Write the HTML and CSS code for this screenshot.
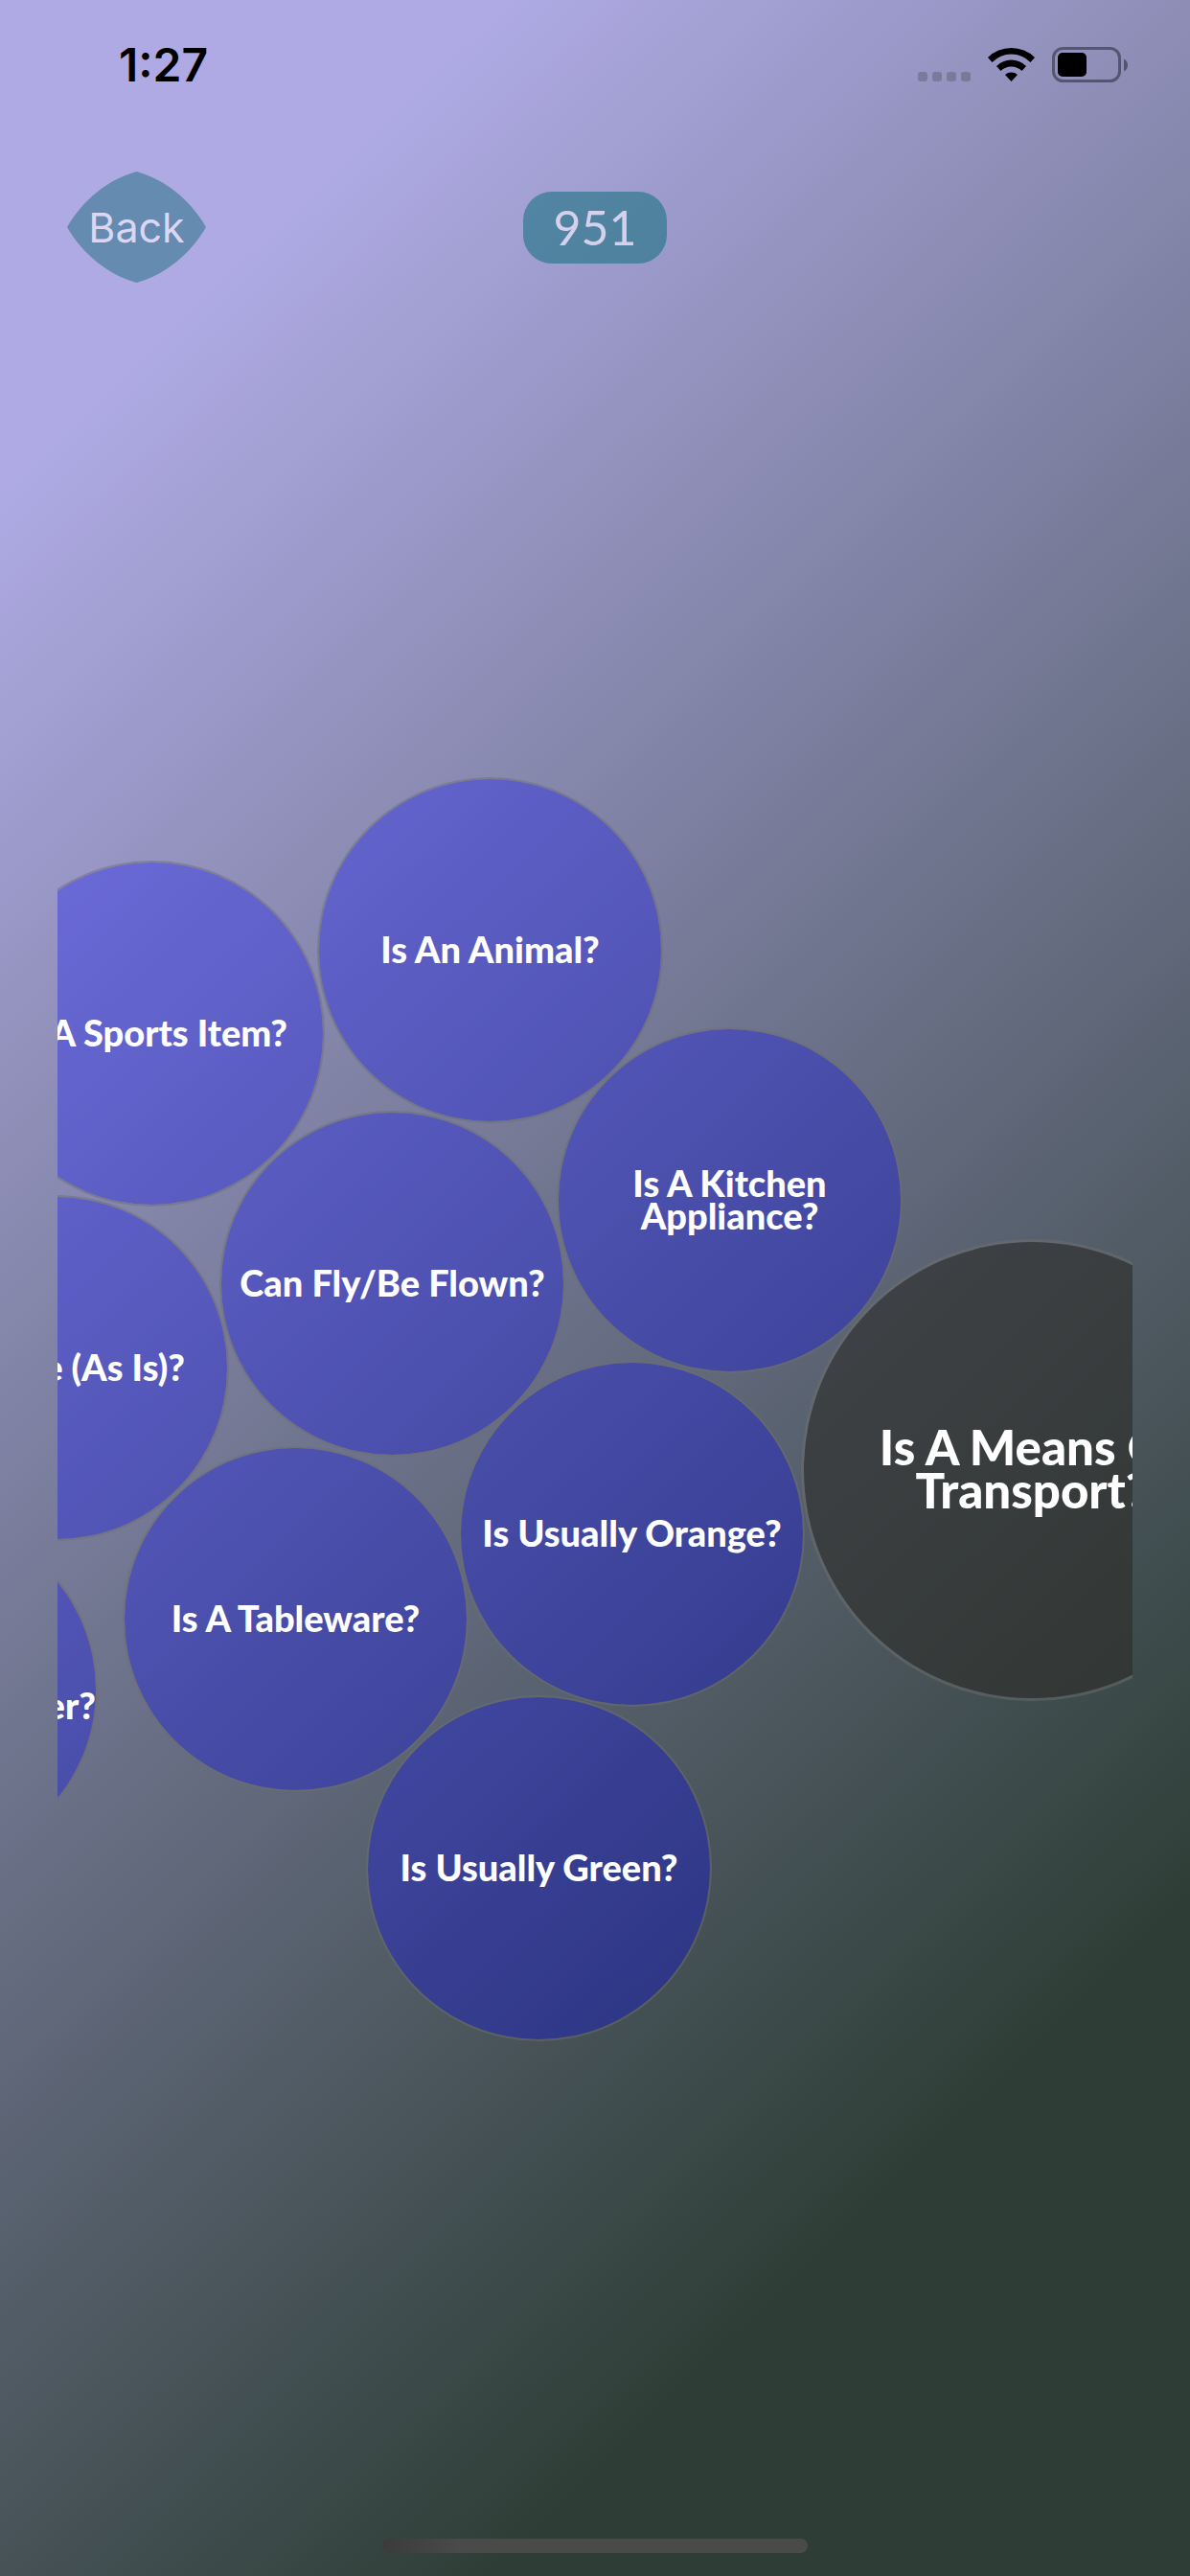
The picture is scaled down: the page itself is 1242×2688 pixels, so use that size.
FILE: index.html
```html
<!DOCTYPE html>
<html lang="en">
<head>
<meta charset="utf-8">
<meta name="viewport" content="width=device-width, initial-scale=1">
<title>Questions</title>
<link rel="stylesheet" href="styles.css">
</head>
<body>
<div class="screen">
  <header class="status">
    <span class="time">1:27</span>
    <svg class="status-icons" width="220" height="38" viewBox="0 0 220 38" aria-hidden="true">
      <g fill="#3c3c43" fill-opacity=".3">
        <rect x="0" y="27" width="10" height="10" rx="3"/>
        <rect x="15" y="27" width="10" height="10" rx="3"/>
        <rect x="30" y="27" width="10" height="10" rx="3"/>
        <rect x="45" y="27" width="10" height="10" rx="3"/>
      </g>
      <path d="M73 12A35 35 0 0 1 122 12L117.500 17A28 28 0 0 0 77.500 17Z"/>
      <path d="M82 21A22 22 0 0 1 113 21L108.500 26A15.500 15.500 0 0 0 86.500 26Z"/>
      <path d="M91 30A10 10 0 0 1 104 30L97.500 37Z"/>
      <rect x="141.500" y="2.500" width="69" height="34" rx="10" fill="none" stroke="#1c1c28" stroke-opacity=".5" stroke-width="3"/>
      <path d="M215 13.500Q219 15.500 219 20T215 26.500Z" fill="#1c1c28" fill-opacity=".5"/>
      <rect x="146" y="7" width="30" height="25" rx="5"/>
    </svg>
  </header>
  <nav class="bar">
    <button class="back" type="button">
      <svg class="back-shape" viewBox="0 0 145 116" aria-hidden="true"><path d="M72.500 0C102 8 129 30 145 58C129 86 102 108 72.500 116C43 108 16 86 0 58C16 30 43 8 72.500 0Z"/></svg>
      <span class="back-label">Back</span>
    </button>
    <output class="score">951</output>
  </nav>
  <main class="board">
    <button type="button" class="bubble" style="--x:271px;--y:516px">Is An Animal?</button>
    <button type="button" class="bubble" style="--x:-82px;--y:603px">Is A Sports Item?</button>
    <button type="button" class="bubble" style="--x:521px;--y:777px">Is A Kitchen<br>Appliance?</button>
    <button type="button" class="bubble" style="--x:169px;--y:864px">Can Fly/Be Flown?</button>
    <button type="button" class="bubble" style="--x:-182px;--y:952px">Is Edible (As Is)?</button>
    <button type="button" class="bubble" style="--x:419px;--y:1125px">Is Usually Orange?</button>
    <button type="button" class="bubble" style="--x:68px;--y:1214px">Is A Tableware?</button>
    <button type="button" class="bubble" style="--x:-319px;--y:1288px">Is Used For<br>Storing Things Drier?</button>
    <button type="button" class="bubble" style="--x:322px;--y:1474px">Is Usually Green?</button>
    <button type="button" class="bubble chosen" style="--x:776px;--y:998px">Is A Means Of<br>Transport?</button>
  </main>
  <div class="home-indicator"></div>
</div>
</body>
</html>
```
FILE: styles.css
```css
* { box-sizing: border-box; }

body {
  margin: 0;
  font-family: Inter, "Liberation Sans", sans-serif;
}

button {
  margin: 0;
  padding: 0;
  border: 0;
  background: none;
  font: inherit;
}

.screen {
  display: flex;
  flex-direction: column;
  min-height: 100vh;
  padding-bottom: 24px;
  background: linear-gradient(136deg, #afaae4 13%, #2e3e36 82%);
}

.status {
  display: flex;
  justify-content: space-between;
  align-items: center;
  height: 134px;
  padding: 0 64px 0 124px;
}

.time {
  font-size: 48px;
  font-weight: 600;
  color: #000;
}

.bar {
  display: grid;
  grid-template-columns: 1fr auto 1fr;
  align-items: center;
  padding: 45px 70px 0;
}

.back {
  display: grid;
  place-items: center;
  width: 145px;
  height: 116px;
}

.back-shape,
.back-label { grid-area: 1 / 1; }

.back-shape {
  width: 100%;
  height: 100%;
  fill: rgba(0, 98, 104, .42);
}

.back-label {
  font-size: 43px;
  color: #dad6f3;
}

.score {
  display: grid;
  place-items: center;
  width: 150px;
  height: 75px;
  border-radius: 30px;
  background: rgba(0, 106, 114, .5);
  color: #d5d1ec;
  font-family: Lato, sans-serif;
  font-size: 50px;
  font-weight: 400;
}

.board {
  position: relative;
  flex: 1;
  min-height: 1900px;
  margin: 0 60px;
  overflow: hidden;
}

.bubble {
  position: absolute;
  left: var(--x);
  top: var(--y);
  width: 361px;
  height: 361px;
  padding-bottom: 4px;
  border: 2px solid rgba(110, 110, 110, .5);
  border-radius: 50%;
  background: rgba(0, 0, 255, .3) padding-box;
  color: #fff;
  font-family: Lato, "Open Sans", sans-serif;
  font-size: 38px;
  font-weight: 900;
  line-height: 34px;
  text-align: center;
  white-space: nowrap;
}

.chosen {
  width: 482px;
  height: 482px;
  border-width: 3px;
  background-color: rgba(46, 45, 43, .64);
  font-size: 51px;
  line-height: 45px;
}

.home-indicator {
  align-self: center;
  width: 444px;
  height: 15px;
  border-radius: 8px;
  background: linear-gradient(90deg, #3b3b3b, #4a4a4a 18%);
}
```
